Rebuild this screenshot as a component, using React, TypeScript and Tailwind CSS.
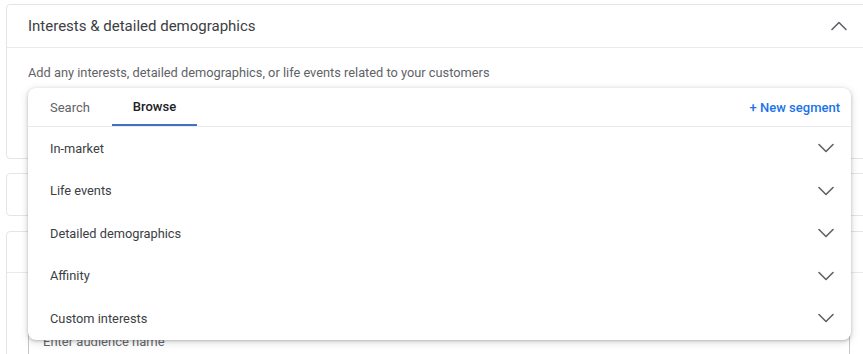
import React from 'react';

const categories = ['In-market', 'Life events', 'Detailed demographics', 'Affinity', 'Custom interests'];

function Chevron({ up = false }: { up?: boolean }) {
  return (
    <svg width="16" height="16" viewBox="0 0 16 16" fill="none" className="shrink-0">
      <polyline
        points={up ? '1,11.5 8,4.5 15,11.5' : '1,4.5 8,11.5 15,4.5'}
        stroke="#5f6368"
        strokeWidth="1.6"
        strokeLinecap="round"
        strokeLinejoin="round"
      />
    </svg>
  );
}

export default function App() {
  return (
    <div
      className="relative w-[863px] h-[354px] overflow-hidden bg-white pl-[6px] pt-[4px]"
      style={{ fontFamily: 'Roboto, "Liberation Sans", sans-serif' }}
    >
      {/* card behind */}
      <div className="w-[880px] h-[155px] border border-[#e3e5e8] rounded-l-[4px]">
        <div className="h-[43px] flex items-center justify-between pl-[21px] pr-[38px] border-b border-[#e8eaed]">
          <span className="text-[15px] text-[#3c4043]">Interests &amp; detailed demographics</span>
          <Chevron up />
        </div>
        <div className="pl-[21px] pt-[15px] text-[12.8px] text-[#5f6368]">
          Add any interests, detailed demographics, or life events related to your customers
        </div>
      </div>

      <div className="mt-[14px] w-[880px] h-[43px] border border-[#e3e5e8] rounded-l-[4px]" />

      <div className="mt-[15px] w-[880px] h-[140px] border border-[#e3e5e8] rounded-l-[4px]">
        <div className="h-[41px] border-b border-[#e8eaed]" />
        <div className="pl-[21px] pt-[48px]">
          <div className="w-[822px] h-[60px] border border-[#c4c7c5] rounded-[4px] pl-[14px] pt-[10px] text-[13px] text-[#5f6368]">
            Enter audience name
          </div>
        </div>
      </div>

      {/* popup */}
      <div className="absolute left-[28px] top-[88px] w-[823px] h-[252px] bg-white rounded-[8px] shadow-[0_1px_3px_rgba(60,64,67,0.3),0_2px_6px_2px_rgba(60,64,67,0.12)] overflow-hidden">
        <div className="h-[39px] flex items-stretch border-b border-[#e8eaed]">
          <div className="w-[84px] flex items-center pl-[22px] pt-[1px] text-[13px] text-[#5f6368]">Search</div>
          <div className="w-[85px] flex items-center justify-center pt-[1px] text-[13px] text-[#202124] font-medium border-b-2 border-[#3f73bd]">
            Browse
          </div>
          <div className="flex-1 flex items-center justify-end pr-[11px] pt-[1px] text-[13px] text-[#1a73e8] font-medium">
            + New segment
          </div>
        </div>
        <div className="flex flex-col">
          {categories.map((c) => (
            <div key={c} className="h-[42.5px] flex items-center justify-between pl-[22px] pr-[17px]">
              <span className="text-[12.8px] text-[#3c4043]">{c}</span>
              <Chevron />
            </div>
          ))}
        </div>
      </div>
    </div>
  );
}
